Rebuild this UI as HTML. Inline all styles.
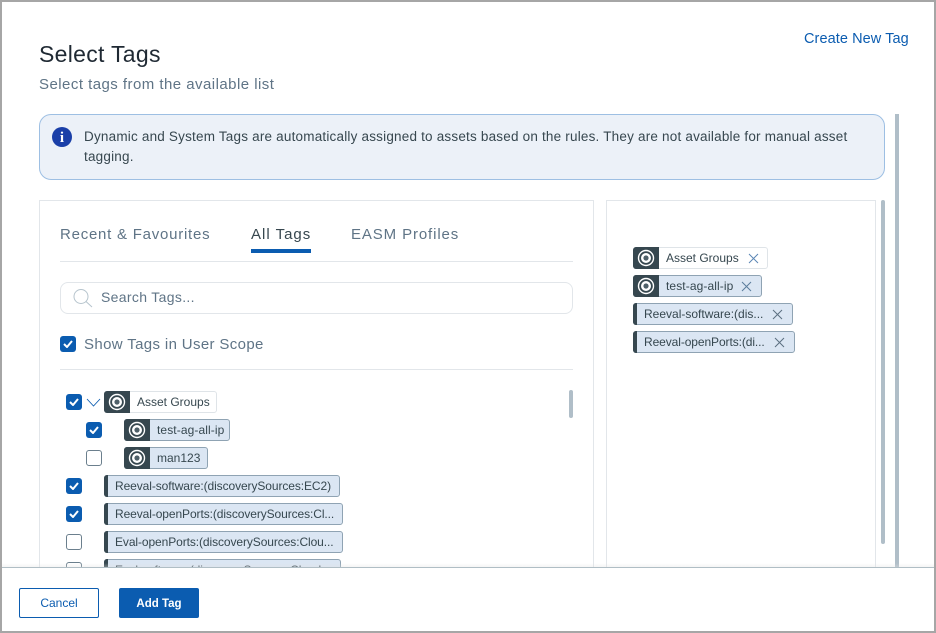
<!DOCTYPE html>
<html><head><meta charset="utf-8"><style>
html,body{margin:0;padding:0;background:#fff}
body{width:936px;height:633px;position:relative;overflow:hidden;font-family:"Liberation Sans",sans-serif}
.a{position:absolute;white-space:nowrap}
.box{position:absolute;box-sizing:border-box}
.tag{position:absolute;box-sizing:border-box;height:22px;border:1px solid #8fa3b3;border-radius:3px;background:#dbe6f3}
.tag.w{background:#fff;border-color:#dfe4e8}
.tag .ic{position:absolute;left:-1px;top:-1px;width:26px;height:22px;background:#36474f;border-radius:3px 0 0 3px}
.tag .ic svg{position:absolute;left:4px;top:2px}
.tag .bar{position:absolute;left:-1px;top:-1px;width:4px;height:22px;background:#36474f;border-radius:3px 0 0 3px}
.tag span{position:absolute;top:3px;font-size:12px;line-height:15px;color:#36474f;white-space:nowrap}
.tag span.l{letter-spacing:-.09px}
.tag>svg{position:absolute;top:5px}
.cb{position:absolute;box-sizing:border-box;width:16px;height:16px;border-radius:3px;background:#0b5cb0}
.cb svg{position:absolute;left:3px;top:4px}
.cb.o{background:#fff;border:1px solid #6b7f8d}
</style></head><body>

<div class="a" style="left:39px;top:40px;font-size:23px;line-height:28px;color:#1f2933;letter-spacing:.3px">Select Tags</div>
<div class="a" style="left:39px;top:76px;font-size:15px;line-height:18px;color:#5f7486;letter-spacing:.46px">Select tags from the available list</div>
<div class="a" style="left:804px;top:30px;font-size:14.5px;line-height:18px;color:#0b5cb0;letter-spacing:.08px">Create New Tag</div>

<div class="box" style="left:39px;top:114px;width:846px;height:66px;background:#ecf1f8;border:1px solid #9dbfe3;border-radius:12px"></div>
<div class="box" style="left:52px;top:127px;width:20px;height:20px;border-radius:50%;background:#1a3fa8"></div>
<div class="a" style="left:52px;top:128px;width:20px;text-align:center;font:bold 15px/20px 'Liberation Serif',serif;color:#fff">i</div>
<div class="a" style="left:84px;top:127px;font-size:13.5px;line-height:19px;color:#37474f;letter-spacing:.2px">Dynamic and System Tags are automatically assigned to assets based on the rules. They are not available for manual asset</div>
<div class="a" style="left:84px;top:147px;font-size:13.5px;line-height:19px;color:#37474f;letter-spacing:.2px">tagging.</div>

<div class="box" style="left:39px;top:200px;width:555px;height:380px;border:1px solid #e2e6ea;border-bottom:0"></div>
<div class="box" style="left:606px;top:200px;width:270px;height:380px;border:1px solid #e2e6ea;border-bottom:0"></div>
<div class="box" style="left:881px;top:200px;width:4px;height:344px;background:#b0bec8;border-radius:2px"></div>
<div class="box" style="left:895px;top:114px;width:4px;height:454px;background:#b0bec8"></div>

<div class="a" style="left:60px;top:226px;font-size:15px;line-height:18px;color:#5f7486;letter-spacing:.76px">Recent &amp; Favourites</div>
<div class="a" style="left:251px;top:226px;font-size:15px;line-height:18px;color:#37474f;letter-spacing:1px">All Tags</div>
<div class="box" style="left:251px;top:249px;width:60px;height:4px;background:#0b5cb0"></div>
<div class="a" style="left:351px;top:226px;font-size:15px;line-height:18px;color:#5f7486;letter-spacing:.88px">EASM Profiles</div>
<div class="box" style="left:60px;top:261px;width:513px;height:1px;background:#e2e6ea"></div>

<div class="box" style="left:60px;top:282px;width:513px;height:32px;border:1px solid #e2e6ea;border-radius:8px"></div>
<svg class="a" style="left:72px;top:288px" width="22" height="22" viewBox="0 0 22 22" fill="none" stroke="#b6c4cd" stroke-width="1"><circle cx="9" cy="8.5" r="7"/><path d="M14 13.5l6 5.5"/></svg>
<div class="a" style="left:101px;top:288px;font-size:14px;line-height:18px;color:#5f7486;letter-spacing:.33px">Search Tags...</div>

<div class="cb" style="left:60px;top:336px"><svg width="10" height="8" viewBox="0 0 10 8" fill="none" stroke="#fff" stroke-width="2"><path d="M1 4l3 3 5-6"/></svg></div>
<div class="a" style="left:84px;top:336px;font-size:15px;line-height:18px;color:#5f7486;letter-spacing:.36px">Show Tags in User Scope</div>
<div class="box" style="left:60px;top:369px;width:513px;height:1px;background:#e2e6ea"></div>
<div class="box" style="left:569px;top:390px;width:4px;height:28px;background:#b0bec8;border-radius:2px"></div>

<div class="cb" style="left:66px;top:394px"><svg width="10" height="8" viewBox="0 0 10 8" fill="none" stroke="#fff" stroke-width="2"><path d="M1 4l3 3 5-6"/></svg></div>
<svg class="a" style="left:86px;top:398px" width="15" height="9" viewBox="0 0 15 9" fill="none" stroke="#0b5cb0" stroke-width=".9"><path d="M1 1l6.5 7L14 1"/></svg>
<div class="tag w" style="left:104px;top:391px;width:113px"><div class="ic"><svg width="18" height="18" viewBox="0 0 18 18"><circle cx="9" cy="9" r="7.5" fill="none" stroke="#fff" stroke-width="1.4"/><circle cx="9" cy="9" r="5" fill="#fff"/><circle cx="9" cy="9" r="2.6" fill="#4f6069"/></svg></div><span style="left:32px">Asset Groups</span></div>

<div class="cb" style="left:86px;top:422px"><svg width="10" height="8" viewBox="0 0 10 8" fill="none" stroke="#fff" stroke-width="2"><path d="M1 4l3 3 5-6"/></svg></div>
<div class="tag" style="left:124px;top:419px;width:106px"><div class="ic"><svg width="18" height="18" viewBox="0 0 18 18"><circle cx="9" cy="9" r="7.5" fill="none" stroke="#fff" stroke-width="1.4"/><circle cx="9" cy="9" r="5" fill="#fff"/><circle cx="9" cy="9" r="2.6" fill="#4f6069"/></svg></div><span style="left:32px;letter-spacing:.1px">test-ag-all-ip</span></div>

<div class="cb o" style="left:86px;top:450px"></div>
<div class="tag" style="left:124px;top:447px;width:84px"><div class="ic"><svg width="18" height="18" viewBox="0 0 18 18"><circle cx="9" cy="9" r="7.5" fill="none" stroke="#fff" stroke-width="1.4"/><circle cx="9" cy="9" r="5" fill="#fff"/><circle cx="9" cy="9" r="2.6" fill="#4f6069"/></svg></div><span style="left:32px">man123</span></div>

<div class="cb" style="left:66px;top:478px"><svg width="10" height="8" viewBox="0 0 10 8" fill="none" stroke="#fff" stroke-width="2"><path d="M1 4l3 3 5-6"/></svg></div>
<div class="tag" style="left:104px;top:475px;width:236px"><div class="bar"></div><span class="l" style="left:10px">Reeval-software:(discoverySources:EC2)</span></div>

<div class="cb" style="left:66px;top:506px"><svg width="10" height="8" viewBox="0 0 10 8" fill="none" stroke="#fff" stroke-width="2"><path d="M1 4l3 3 5-6"/></svg></div>
<div class="tag" style="left:104px;top:503px;width:239px"><div class="bar"></div><span class="l" style="left:10px">Reeval-openPorts:(discoverySources:Cl...</span></div>

<div class="cb o" style="left:66px;top:534px"></div>
<div class="tag" style="left:104px;top:531px;width:239px"><div class="bar"></div><span class="l" style="left:10px">Eval-openPorts:(discoverySources:Clou...</span></div>

<div class="cb o" style="left:66px;top:562px"></div>
<div class="tag" style="left:104px;top:559px;width:237px"><div class="bar"></div><span class="l" style="left:10px">Eval-software:(discoverySources:Cloud...</span></div>

<div class="tag w" style="left:633px;top:247px;width:135px"><div class="ic"><svg width="18" height="18" viewBox="0 0 18 18"><circle cx="9" cy="9" r="7.5" fill="none" stroke="#fff" stroke-width="1.4"/><circle cx="9" cy="9" r="5" fill="#fff"/><circle cx="9" cy="9" r="2.6" fill="#4f6069"/></svg></div><span style="left:32px">Asset Groups</span><svg style="left:114px" width="11" height="11" viewBox="0 0 11 11" fill="none" stroke="#5b86b5" stroke-width="1"><path d="M1 1l9 9M10 1l-9 9"/></svg></div>
<div class="tag" style="left:633px;top:275px;width:129px"><div class="ic"><svg width="18" height="18" viewBox="0 0 18 18"><circle cx="9" cy="9" r="7.5" fill="none" stroke="#fff" stroke-width="1.4"/><circle cx="9" cy="9" r="5" fill="#fff"/><circle cx="9" cy="9" r="2.6" fill="#4f6069"/></svg></div><span style="left:32px;letter-spacing:.1px">test-ag-all-ip</span><svg style="left:107px" width="11" height="11" viewBox="0 0 11 11" fill="none" stroke="#5b7d9c" stroke-width="1"><path d="M1 1l9 9M10 1l-9 9"/></svg></div>
<div class="tag" style="left:633px;top:303px;width:160px"><div class="bar"></div><span style="left:10px">Reeval-software:(dis...</span><svg style="left:138px" width="11" height="11" viewBox="0 0 11 11" fill="none" stroke="#5b6f80" stroke-width="1"><path d="M1 1l9 9M10 1l-9 9"/></svg></div>
<div class="tag" style="left:633px;top:331px;width:162px"><div class="bar"></div><span class="l" style="left:10px">Reeval-openPorts:(di...</span><svg style="left:140px" width="11" height="11" viewBox="0 0 11 11" fill="none" stroke="#5b6f80" stroke-width="1"><path d="M1 1l9 9M10 1l-9 9"/></svg></div>

<div class="box" style="left:0;top:563px;width:936px;height:4px;background:linear-gradient(rgba(230,230,230,0),rgba(225,225,225,.35))"></div>
<div class="box" style="left:0;top:567px;width:936px;height:66px;background:#fff;border-top:1px solid #b0bec5"></div>
<div class="box" style="left:19px;top:588px;width:80px;height:30px;border:1px solid #0b5cb0;border-radius:2px;background:#fff"></div>
<div class="a" style="left:19px;top:588px;width:80px;text-align:center;font-size:12px;line-height:30px;color:#0b5cb0">Cancel</div>
<div class="box" style="left:119px;top:588px;width:80px;height:30px;background:#0b5cb0;border-radius:2px"></div>
<div class="a" style="left:119px;top:589px;width:80px;text-align:center;font-size:11.5px;font-weight:bold;line-height:30px;color:#fff">Add Tag</div>

<div class="box" style="left:0;top:0;width:936px;height:633px;border:2px solid #a6a6a6"></div>
</body></html>
